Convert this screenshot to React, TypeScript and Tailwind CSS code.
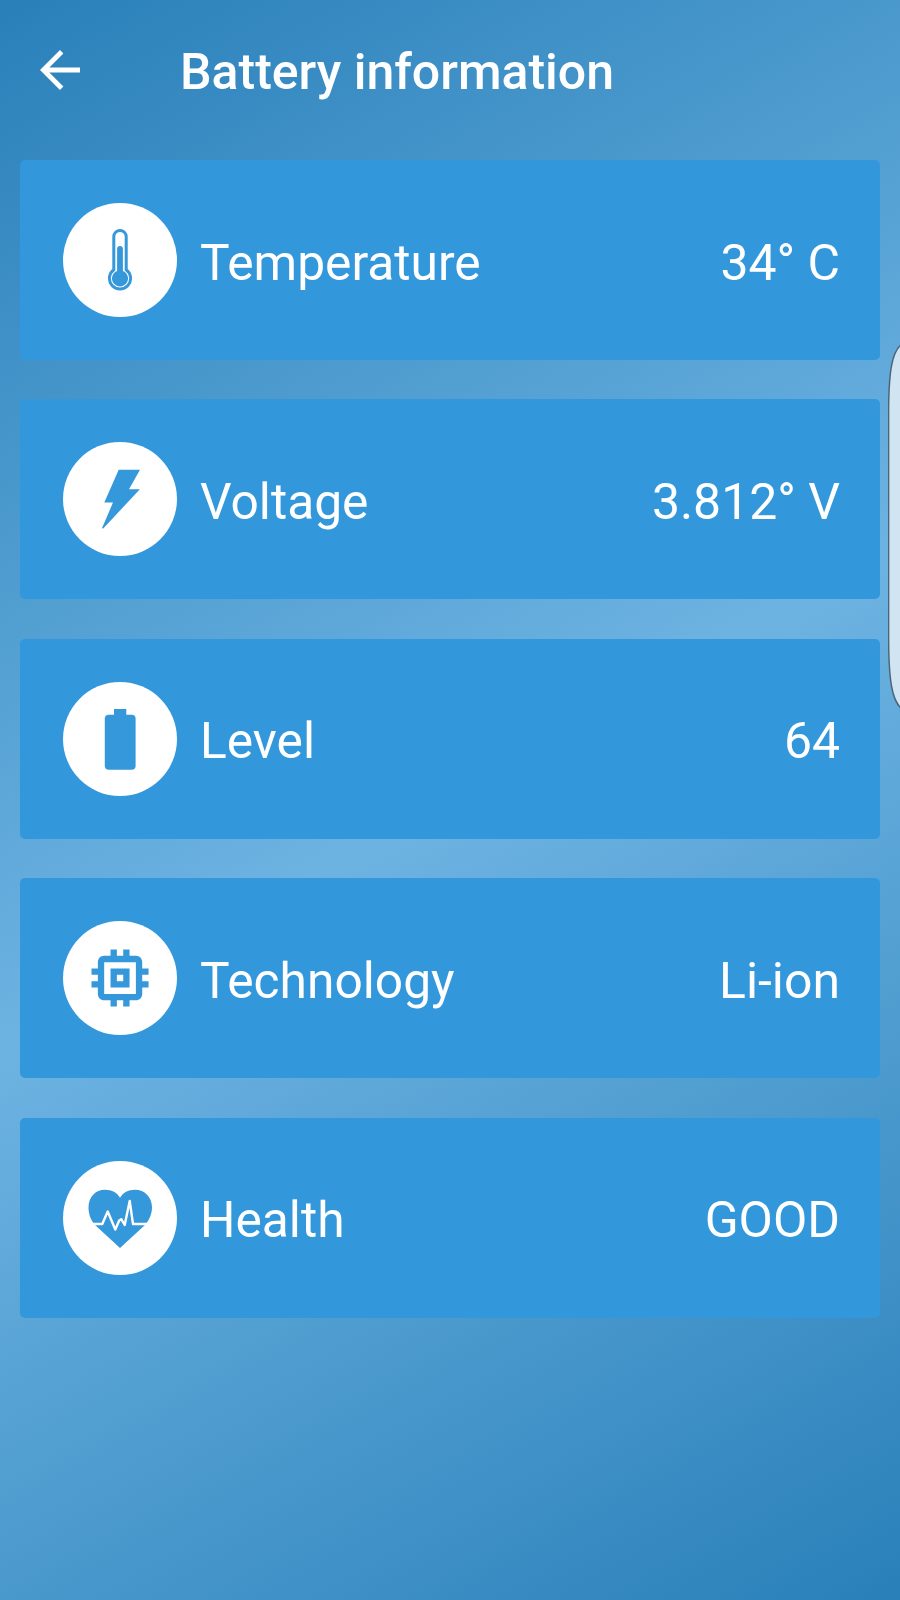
import type { ReactNode } from "react";
import { clsx } from "clsx";

function ThermometerIcon() {
  return (
    <>
      <path
        d="M50.8 66.7V33.6a6.2 6.2 0 0 1 12.4 0V66.7a10.6 10.6 0 1 1-12.4 0z"
        fill="none"
        stroke="#3498db"
        strokeWidth="3"
      />
      <path
        d="M54.1 46a2.9 2.9 0 0 1 5.8 0V68a8 8 0 1 1-5.8 0z"
        fill="#3498db"
      />
    </>
  );
}

function BoltIcon() {
  return (
    <path
      d="M55.7 27.7H77L66 47.3h10.9L40.2 86.4a.6.6 0 0 1-1-.6L50 60.5h-8.7z"
      fill="#3498db"
    />
  );
}

function BatteryIcon() {
  return (
    <g fill="#3498db">
      <rect x="51" y="27" width="12.3" height="8" />
      <rect x="41.8" y="32.7" width="30.8" height="55" rx="4" />
    </g>
  );
}

function ChipIcon() {
  return (
    <path
      transform="translate(19 19) scale(3.17)"
      d="M15 9H9v6h6V9zm-2 4h-2v-2h2v2zm8-2V9h-2V7c0-1.1-.9-2-2-2h-2V3h-2v2h-2V3H9v2H7c-1.1 0-2 .9-2 2v2H3v2h2v2H3v2h2v2c0 1.1.9 2 2 2h2v2h2v-2h2v2h2v-2h2c1.1 0 2-.9 2-2v-2h2v-2h-2v-2h2zm-4 6H7V7h10v10z"
      fill="#3498db"
    />
  );
}

function HeartIcon() {
  return (
    <>
      <path
        d="M57 87L32 64C27.500 59 25.500 52.500 25.500 46.500C25.500 36 32.500 28.700 42 28.700C49 28.700 54 31.500 57 36.700C60 31.500 65 28.700 72 28.700C81.500 28.700 89 36 89 46.500C89 52.500 86.500 59 82 64z"
        fill="#3498db"
      />
      <path
        d="M30 63h9.300L44.700 50.500L52.300 68.500L56.200 59.500L58.300 58.200L61.700 64L66.700 40L70 63H86"
        fill="none"
        stroke="#fff"
        strokeWidth="2.400"
        strokeLinejoin="round"
      />
    </>
  );
}

const rows: Array<{ label: string; value: string; icon: ReactNode }> = [
  { label: "Temperature", value: "34° C", icon: <ThermometerIcon /> },
  { label: "Voltage", value: "3.812° V", icon: <BoltIcon /> },
  { label: "Level", value: "64", icon: <BatteryIcon /> },
  { label: "Technology", value: "Li-ion", icon: <ChipIcon /> },
  { label: "Health", value: "GOOD", icon: <HeartIcon /> },
];

function InfoCard({
  label,
  value,
  icon,
}: {
  label: string;
  value: string;
  icon: ReactNode;
}) {
  return (
    <div className="flex h-[200px] items-center rounded-[5px] bg-[#3398db] pr-10 pl-[43px] leading-[60px]">
      <svg viewBox="0 0 114 114" className="size-[114px] rounded-full bg-white">
        {icon}
      </svg>
      <span className="mt-[5px] ml-[23px] text-[49.7px]">{label}</span>
      <span className="mt-[5px] ml-auto text-[49.9px]">{value}</span>
    </div>
  );
}

export default function App() {
  return (
    <div
      className={clsx(
        "relative h-[1600px] w-[900px] overflow-hidden font-[Roboto,sans-serif] text-white",
        "bg-[linear-gradient(150.64deg,#2980b9,#6db3e2_50%,#2980b9)]"
      )}
    >
      <header className="flex h-[160px] items-start pt-[41px] pl-10">
        <svg
          viewBox="0 0 40 40"
          className="mt-[9px] size-10"
          fill="none"
          stroke="#fff"
          strokeWidth="4.8"
        >
          <path d="M40 20H4M21.700 1.700L3.400 20l18.300 18.300" />
        </svg>
        <h1 className="mt-px ml-[100px] text-[50px] leading-[60px] font-medium">
          Battery information
        </h1>
      </header>
      <main className="flex flex-col gap-[39.4px] px-5">
        {rows.map((row) => (
          <InfoCard key={row.label} {...row} />
        ))}
      </main>
      {/* edge panel handle, floats over the right side */}
      <svg
        viewBox="0 0 12 370"
        className="absolute top-[341px] right-0 h-[370px] w-3"
      >
        <path
          d="M14 3C4 10 .8 30 .6 70V298C.8 340 4 360 14 368z"
          fill="#d0e4f1"
          stroke="#4a6678"
          strokeWidth="1.500"
        />
      </svg>
    </div>
  );
}
